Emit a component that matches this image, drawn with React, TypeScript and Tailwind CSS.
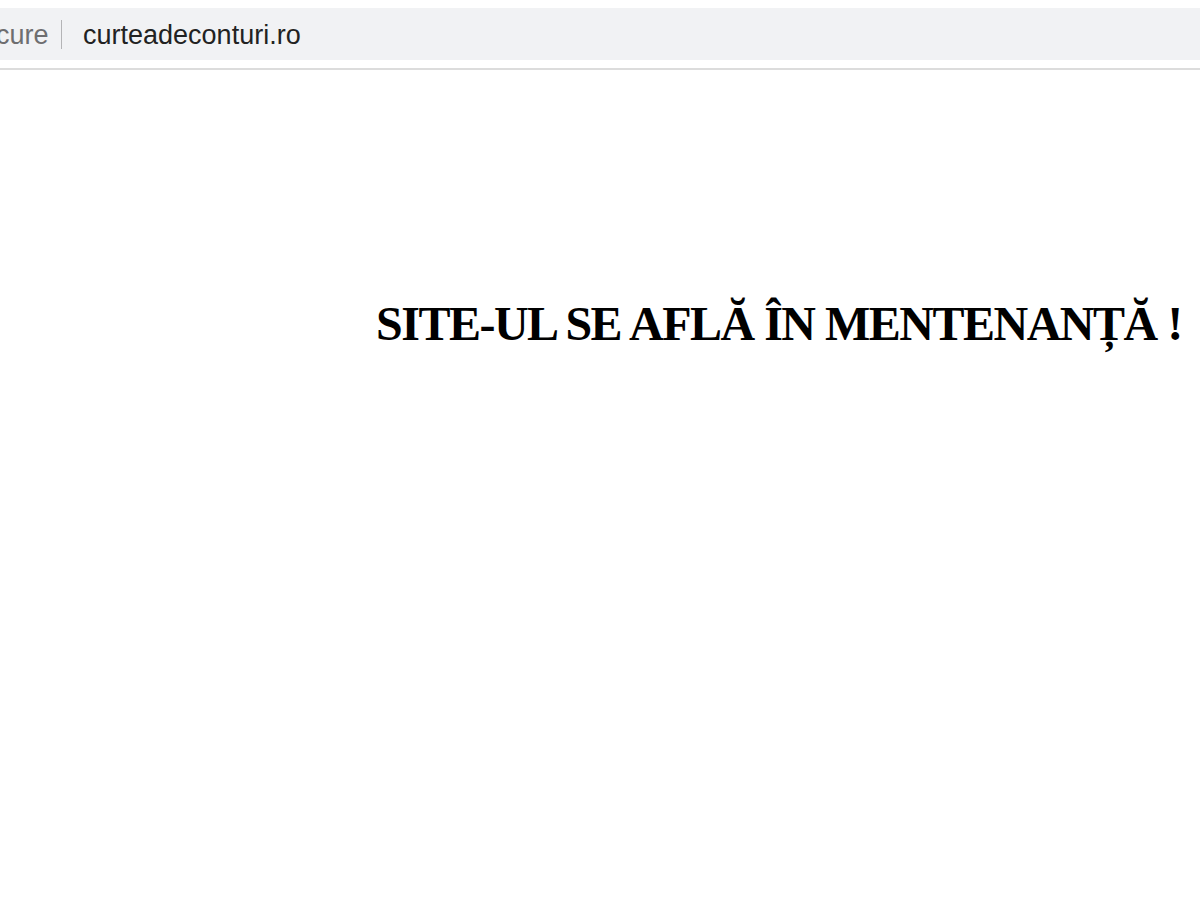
import React from "react";

const App: React.FC = () => {
  return (
    <div className="min-h-[900px] w-[1200px] overflow-hidden bg-white">
      <div className="pt-2">
        <div className="flex h-[52px] items-center bg-[#f1f2f4] font-['Liberation_Sans',Arial,sans-serif] text-[27px]">
          <span className="ml-[-4px] pt-[2px] text-[#6e6e70]">cure</span>
          <span className="ml-[12px] mr-[21px] mt-[1px] h-[29px] w-[1.5px] bg-[#b4b4b6]" />
          <span className="pt-[2px] text-[#222]">curteadeconturi.ro</span>
        </div>
        <div className="mt-2 h-[2px] bg-[#dcdcdc]" />
      </div>
      <div className="pl-[376px] pt-[230px]">
        <h1 className="whitespace-nowrap font-['Liberation_Serif','Times_New_Roman',serif] text-[48px] font-bold leading-none tracking-[-1.5px] text-black">
          SITE-UL SE AFLĂ ÎN MENTENANȚĂ !
        </h1>
      </div>
    </div>
  );
};

export default App;
